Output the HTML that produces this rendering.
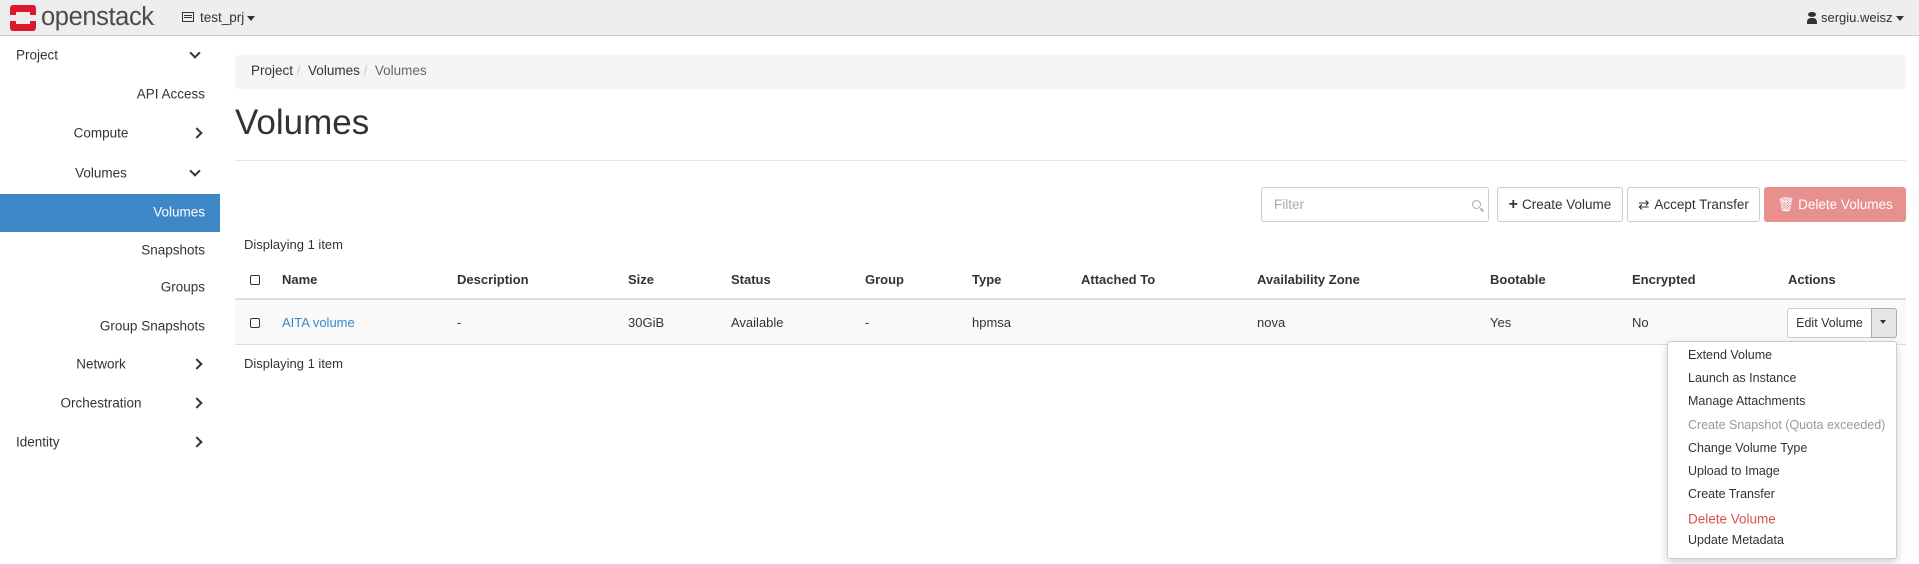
<!DOCTYPE html>
<html><head><meta charset="utf-8"><style>
*{box-sizing:border-box;margin:0;padding:0}
body{width:1919px;height:564px;overflow:hidden;background:#fff;font-family:"Liberation Sans",Arial,sans-serif;font-size:13px;color:#333;position:relative}
.a{position:absolute;white-space:nowrap}
.nav{position:absolute;left:0;top:0;width:1919px;height:36px;background:#eee;border-bottom:1px solid #ccc}
.side{position:absolute;left:0;top:0;width:220px;height:564px}
.si{position:absolute;right:15px;font-size:13.5px;color:#333;transform:translateY(-50%);white-space:nowrap}
.sc{position:absolute;left:101px;font-size:13.5px;color:#333;transform:translate(-50%,-50%);white-space:nowrap}
.chev{position:absolute;left:191px;width:8px;height:8px;border-right:2.5px solid #333;border-bottom:2.5px solid #333}
.down{transform:rotate(45deg)}
.right{transform:rotate(-45deg)}
.btn{position:absolute;border:1px solid #ccc;border-radius:3px;background:#fff;height:35px;top:187px;font-size:13.5px;display:flex;align-items:center;justify-content:center;color:#333}
.th{font-weight:bold}
.cb{position:absolute;width:10px;height:10px;border:1px solid #333;border-radius:2px;left:250px}
.mi{position:absolute;left:1688px;font-size:12.5px;transform:translateY(-50%)}
</style></head><body>
<div class="nav">
 <div class="a" style="left:10px;top:5px;width:26px;height:26px;background:#da1a32;border-radius:3px"></div>
 <div class="a" style="left:16px;top:12px;width:14px;height:12px;background:#eee"></div>
 <div class="a" style="left:10px;top:15px;width:6px;height:6px;background:#eee"></div>
 <div class="a" style="left:30px;top:15px;width:6px;height:6px;background:#eee"></div>
 <div class="a" style="left:41px;top:3px;font-size:25.5px;color:#4d4b4b;letter-spacing:-0.4px">openstack<span style="font-size:9px;color:#999">.</span></div>
 <div class="a" style="left:182px;top:12px;width:12px;height:10px;border:1.5px solid #333"></div>
 <div class="a" style="left:184px;top:15px;width:8px;height:1px;background:#333;box-shadow:0 2px 0 #333"></div>
 <div class="a" style="left:200px;top:10px;font-size:13.5px">test_prj</div>
 <div class="a" style="left:247px;top:16px;border:4px solid transparent;border-top:5px solid #333"></div>
 <div class="a" style="left:1808px;top:12px;width:8px;height:5px;background:#333;border-radius:50%"></div>
 <div class="a" style="left:1807px;top:18px;width:10px;height:6px;background:#333;border-radius:4px 4px 0 0"></div>
 <div class="a" style="left:1821px;top:10px;font-size:13px">sergiu.weisz</div>
 <div class="a" style="left:1896px;top:16px;border:4px solid transparent;border-top:5px solid #333"></div>
</div>
<div class="side">
<div class="a" style="left:16px;top:55px;font-size:13.5px;transform:translateY(-50%)">Project</div>
<div class="chev down" style="top:49px"></div>
<div class="si" style="top:94px">API Access</div>
<div class="sc" style="top:133px">Compute</div><div class="chev right" style="top:129px;left:193px"></div>
<div class="sc" style="top:173px">Volumes</div><div class="chev down" style="top:167px"></div>
<div class="a" style="left:0;top:194px;width:220px;height:38px;background:#3f88c8"></div>
<div class="si" style="top:212px;color:#fff">Volumes</div>
<div class="si" style="top:250px">Snapshots</div>
<div class="si" style="top:287px">Groups</div>
<div class="si" style="top:326px">Group Snapshots</div>
<div class="sc" style="top:364px">Network</div><div class="chev right" style="top:360px;left:193px"></div>
<div class="sc" style="top:403px">Orchestration</div><div class="chev right" style="top:399px;left:193px"></div>
<div class="a" style="left:16px;top:442px;font-size:13.5px;transform:translateY(-50%)">Identity</div><div class="chev right" style="top:438px;left:193px"></div>
</div>

<div class="a" style="left:235px;top:55px;width:1671px;height:34px;background:#f5f5f5;border-radius:4px"></div>
<div class="a" style="left:251px;top:63px;font-size:13.5px">Project <span style="color:#ccc">/</span>&nbsp; Volumes <span style="color:#ccc">/</span>&nbsp; <span style="color:#666">Volumes</span></div>
<div class="a" style="left:235px;top:103px;font-size:35px;color:#333">Volumes</div>
<div class="a" style="left:235px;top:160px;width:1671px;height:1px;background:#e5e5e5"></div>

<div class="a" style="left:1261px;top:187px;width:228px;height:35px;border:1px solid #ccc;border-radius:3px"></div>
<div class="a" style="left:1274px;top:197px;font-size:13.5px;color:#aaa">Filter</div>
<div class="a" style="left:1472px;top:200px;width:9px;height:9px;border:1.5px solid #aaa;border-radius:50%"></div>
<div class="a" style="left:1480px;top:209px;width:4px;height:1.5px;background:#aaa;transform:rotate(45deg)"></div>
<div class="btn" style="left:1497px;width:126px"><b style="font-size:16px;margin-right:4px">+</b>Create Volume</div>
<div class="btn" style="left:1627px;width:133px"><span style="margin-right:5px">⇄</span>Accept Transfer</div>
<div class="btn" style="left:1764px;width:142px;background:#e7908e;border-color:#e7908e;color:#fff">🗑&nbsp;Delete Volumes</div>

<div class="a" style="left:244px;top:237px;font-size:13px">Displaying 1 item</div>
<div class="cb" style="top:275px"></div>
<div class="a th" style="top:272px;left:282px">Name</div>
<div class="a th" style="top:272px;left:457px">Description</div>
<div class="a th" style="top:272px;left:628px">Size</div>
<div class="a th" style="top:272px;left:731px">Status</div>
<div class="a th" style="top:272px;left:865px">Group</div>
<div class="a th" style="top:272px;left:972px">Type</div>
<div class="a th" style="top:272px;left:1081px">Attached To</div>
<div class="a th" style="top:272px;left:1257px">Availability Zone</div>
<div class="a th" style="top:272px;left:1490px">Bootable</div>
<div class="a th" style="top:272px;left:1632px">Encrypted</div>
<div class="a th" style="top:272px;left:1788px">Actions</div>
<div class="a" style="left:235px;top:298px;width:1671px;height:47px;background:#f9f9f9;border-top:2px solid #ddd;border-bottom:1px solid #ddd"></div>
<div class="cb" style="top:318px"></div>
<div class="a" style="top:315px;left:282px;color:#3a87c8">AITA volume</div>
<div class="a" style="top:315px;left:457px">-</div>
<div class="a" style="top:315px;left:628px">30GiB</div>
<div class="a" style="top:315px;left:731px">Available</div>
<div class="a" style="top:315px;left:865px">-</div>
<div class="a" style="top:315px;left:972px">hpmsa</div>
<div class="a" style="top:315px;left:1257px">nova</div>
<div class="a" style="top:315px;left:1490px">Yes</div>
<div class="a" style="top:315px;left:1632px">No</div>
<div class="a" style="left:1787px;top:308px;width:85px;height:30px;border:1px solid #ccc;border-radius:3px 0 0 3px;background:#fff;font-size:12.5px;text-align:center;line-height:28px">Edit Volume</div>
<div class="a" style="left:1871px;top:308px;width:26px;height:30px;border:1px solid #adadad;border-radius:0 3px 3px 0;background:#e6e6e6"></div>
<div class="a" style="left:1880px;top:320px;border:3.5px solid transparent;border-top:4px solid #333"></div>
<div class="a" style="left:244px;top:356px">Displaying 1 item</div>

<div class="a" style="left:1667px;top:341px;width:230px;height:218px;background:#fff;border:1px solid #ccc;border-radius:3px;box-shadow:0 4px 10px rgba(0,0,0,.18)"></div>
<div class="mi" style="top:355px">Extend Volume</div>
<div class="mi" style="top:378px">Launch as Instance</div>
<div class="mi" style="top:401px">Manage Attachments</div>
<div class="mi" style="top:425px;color:#999">Create Snapshot (Quota exceeded)</div>
<div class="mi" style="top:448px">Change Volume Type</div>
<div class="mi" style="top:471px">Upload to Image</div>
<div class="mi" style="top:494px">Create Transfer</div>
<div class="mi" style="top:519px;color:#d9534f;font-size:13.5px">Delete Volume</div>
<div class="mi" style="top:540px">Update Metadata</div>
</body></html>
